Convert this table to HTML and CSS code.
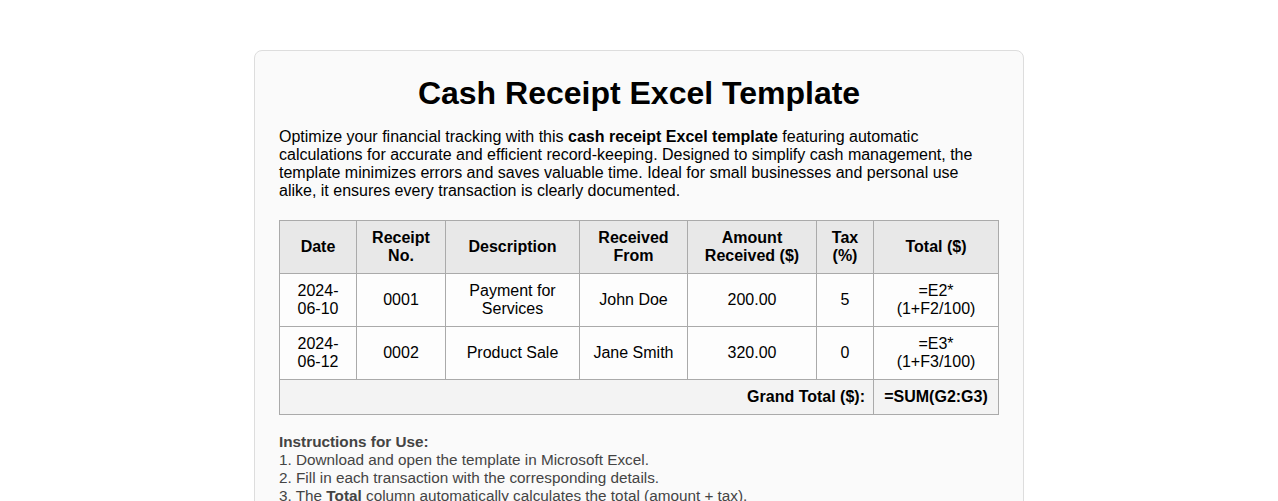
FILE: index.html
```html
<!DOCTYPE html>
<html lang="en">
<head>
<meta charset="utf-8">
<title>Cash Receipt Excel Template</title>
<link rel="stylesheet" href="styles.css">
</head>
<body>
<div class="card">
  <h1 class="title">Cash Receipt Excel Template</h1>
  <p class="intro">Optimize your financial tracking with this <strong>cash receipt Excel template</strong> featuring automatic calculations for accurate and efficient record-keeping. Designed to simplify cash management, the template minimizes errors and saves valuable time. Ideal for small businesses and personal use alike, it ensures every transaction is clearly documented.</p>
  <table class="sheet">
    <colgroup>
      <col class="c-date">
      <col class="c-no">
      <col class="c-desc">
      <col class="c-from">
      <col class="c-amt">
      <col class="c-tax">
      <col class="c-total">
    </colgroup>
    <thead>
      <tr>
        <th>Date</th>
        <th>Receipt No.</th>
        <th>Description</th>
        <th>Received From</th>
        <th>Amount Received ($)</th>
        <th>Tax (%)</th>
        <th>Total ($)</th>
      </tr>
    </thead>
    <tbody>
      <tr>
        <td>2024-06-10</td>
        <td>0001</td>
        <td>Payment for Services</td>
        <td>John Doe</td>
        <td>200.00</td>
        <td>5</td>
        <td>=E2*(1+F2/100)</td>
      </tr>
      <tr>
        <td>2024-06-12</td>
        <td>0002</td>
        <td>Product Sale</td>
        <td>Jane Smith</td>
        <td>320.00</td>
        <td>0</td>
        <td>=E3*(1+F3/100)</td>
      </tr>
    </tbody>
    <tfoot>
      <tr>
        <td class="gt-label" colspan="6">Grand Total ($):</td>
        <td class="gt-value">=SUM(G2:G3)</td>
      </tr>
    </tfoot>
  </table>
  <div class="instructions">
    <strong>Instructions for Use:</strong><br>
    1. Download and open the template in Microsoft Excel.<br>
    2. Fill in each transaction with the corresponding details.<br>
    3. The <strong>Total</strong> column automatically calculates the total (amount + tax).<br>
    4. The <strong>Grand Total</strong> sums up all transactions automatically.
  </div>
</div>
</body>
</html>
```

FILE: styles.css
```css
html, body {
  margin: 0;
  padding: 0;
  background: #ffffff;
}
body {
  font-family: "Liberation Sans", Arial, sans-serif;
  color: #000;
  padding-top: 50px;
}
.card {
  width: 720px;
  margin: 0 auto;
  padding: 24px;
  background: #fafafa;
  border: 1px solid #dddddd;
  border-radius: 8px;
}
.title {
  margin: 0 0 16px;
  font-size: 32px;
  font-weight: bold;
  text-align: center;
}
.intro {
  margin: 0 0 20px;
  font-size: 16px;
  line-height: 18px;
}
.sheet {
  width: 720px;
  border-collapse: collapse;
  table-layout: fixed;
  font-size: 16px;
  line-height: 18px;
}
.c-date { width: 77px; }
.c-no { width: 89px; }
.c-desc { width: 134px; }
.c-from { width: 108px; }
.c-amt { width: 129px; }
.c-tax { width: 57px; }
.c-total { width: 125px; }
.sheet th, .sheet td {
  border: 1px solid #aaaaaa;
  padding: 8px;
  text-align: center;
  vertical-align: middle;
}
.sheet th {
  background: #e8e8e8;
  font-weight: bold;
}
.sheet tbody td {
  background: #fdfdfd;
}
.sheet tfoot td {
  background: #f3f3f3;
  font-weight: bold;
}
.sheet .gt-label {
  text-align: right;
}
.instructions {
  margin-top: 18px;
  font-size: 15.3px;
  line-height: 18px;
  color: #444444;
}
```
